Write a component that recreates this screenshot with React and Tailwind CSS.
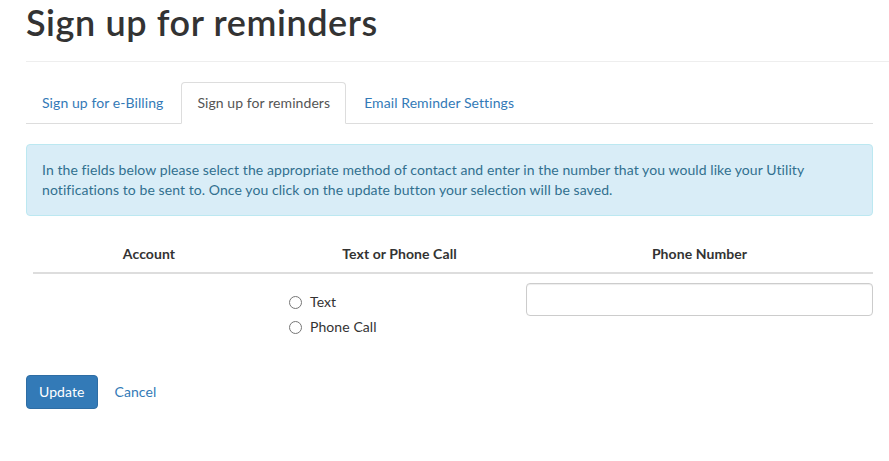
import { useState } from "react";

const tabs = ["Sign up for e-Billing", "Sign up for reminders", "Email Reminder Settings"];

const App = () => {
  const [method, setMethod] = useState("");
  const [phone, setPhone] = useState("");

  return (
    <div className="min-h-[461px] bg-white pl-[26px] font-['Lato','Noto_Sans',sans-serif] text-[14px] leading-[20px] tracking-[0.08px] text-[#333]">
      {/* page header */}
      <div className="border-b border-[#eee] pt-[2px] pb-[9px]">
        <h1 className="mb-[10px] text-[36px] font-semibold leading-[40px] tracking-[0.6px] text-[#333]">Sign up for reminders</h1>
      </div>

      <div className="w-[847px] pt-[20px]">
        {/* tabs */}
        <ul className="flex border-b border-[#ddd]">
          {tabs.map((t, i) => (
            <li key={t} className="mr-[2px] -mb-px">
              <a
                href="#"
                className={
                  i === 1
                    ? "block rounded-t-[4px] border border-[#ddd] border-b-transparent bg-white px-[15px] py-[10px] text-[#555]"
                    : "block rounded-t-[4px] border border-transparent px-[15px] py-[10px] text-[#337ab7]"
                }
              >
                {t}
              </a>
            </li>
          ))}
        </ul>

        {/* info alert */}
        <div className="mt-[20px] rounded-[4px] border border-[#bce8f1] bg-[#d9edf7] p-[15px] text-[#31708f]">
          In the fields below please select the appropriate method of contact and enter in the number that you would like your Utility
          notifications to be sent to. Once you click on the update button your selection will be saved.
        </div>

        {/* table */}
        <div className="mt-[20px] ml-[7px]">
          <div className="grid grid-cols-[232px_261px_347px] border-b-2 border-[#ddd] font-bold">
            <div className="py-[8px] text-center">Account</div>
            <div className="py-[8px] pl-[8px] text-center">Text or Phone Call</div>
            <div className="py-[8px] text-center">Phone Number</div>
          </div>
          <div className="grid grid-cols-[232px_261px_347px]">
            <div />
            <div className="pt-[18px] pl-[24px]">
              <label className="flex h-[20px] items-center gap-[8px]">
                <input
                  type="radio"
                  name="method"
                  checked={method === "text"}
                  onChange={() => setMethod("text")}
                  className="m-0 h-[13px] w-[13px]"
                />
                Text
              </label>
              <label className="mt-[5px] flex h-[20px] items-center gap-[8px]">
                <input
                  type="radio"
                  name="method"
                  checked={method === "call"}
                  onChange={() => setMethod("call")}
                  className="m-0 h-[13px] w-[13px]"
                />
                Phone Call
              </label>
            </div>
            <div className="pt-[9px]">
              <input
                type="text"
                value={phone}
                onChange={(e) => setPhone(e.target.value)}
                className="h-[33px] w-full rounded-[4px] border border-[#ccc] px-[12px] shadow-[inset_0_1px_1px_rgba(0,0,0,0.075)] outline-none"
              />
            </div>
          </div>
        </div>

        {/* actions */}
        <div className="mt-[38px] flex items-center">
          <button className="h-[34px] rounded-[4px] border border-[#2e6da4] bg-[#337ab7] px-[12px] text-white">Update</button>
          <a href="#" className="ml-[17px] text-[#337ab7]">
            Cancel
          </a>
        </div>
      </div>
    </div>
  );
};

export default App;
